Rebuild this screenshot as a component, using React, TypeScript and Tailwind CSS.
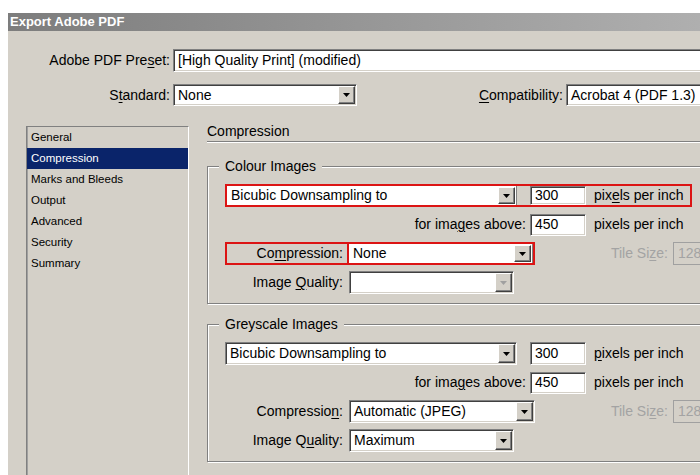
import type { ReactNode } from 'react'

const sections = ['General', 'Compression', 'Marks and Bleeds', 'Output', 'Advanced', 'Security', 'Summary']

const sunken =
  'border border-t-[#808080] border-l-[#808080] border-b-white border-r-white shadow-[inset_1px_1px_0_#404040,inset_-1px_-1px_0_#d4d0c8]'

function Arrow({ disabled }: { disabled?: boolean }) {
  return (
    <div className="w-[17px] self-stretch my-[1px] mr-[1px] flex items-center justify-center bg-[#d4d0c8] border border-t-white border-l-white border-b-[#404040] border-r-[#404040] shadow-[inset_-1px_-1px_0_#808080]">
      <svg width="7" height="4" viewBox="0 0 7 4">
        <path d="M0 0h7L3.5 4z" fill={disabled ? '#a0a0a0' : '#000'} />
      </svg>
    </div>
  )
}

function Select({
  value,
  className,
  disabled,
  bare,
}: {
  value: string
  className: string
  disabled?: boolean
  bare?: boolean
}) {
  return (
    <div
      className={`${className} flex items-center bg-white ${bare ? 'border-r border-r-[#808080]' : sunken}`}
    >
      <span className="flex-1 pl-[4px] whitespace-nowrap overflow-hidden">{value}</span>
      <Arrow disabled={disabled} />
    </div>
  )
}

function Field({ value, className = '' }: { value: string; className?: string }) {
  return (
    <div className={`w-[56px] flex items-center pl-[4px] bg-white ${sunken} ${className}`}>{value}</div>
  )
}

function Key({ before, k, after }: { before: string; k: string; after: string }) {
  return (
    <>
      {before}
      <span className="underline underline-offset-2">{k}</span>
      {after}
    </>
  )
}

function TileSize() {
  return (
    <>
      <div className="w-[138px] text-right pr-[5px] text-[#a3a3a3] whitespace-nowrap">
        <Key before="Tile Si" k="z" after="e:" />
      </div>
      <div className="w-[60px] h-[23px] flex items-center pl-[4px] text-[#a3a3a3] bg-[#d4d0c8] border border-[#a0a0a0] shrink-0">
        128
      </div>
    </>
  )
}

function Group({ title, children }: { title: string; children: ReactNode }) {
  return (
    <fieldset className="border border-[#808080] shadow-[inset_1px_1px_0_#fff,1px_1px_0_#fff] pl-[11px] pb-[9px]">
      <legend className="px-[6px] leading-[16px] bg-[#d4d0c8]">{title}</legend>
      <div className="pl-[6px] pt-[10px] flex flex-col gap-[6px]">{children}</div>
    </fieldset>
  )
}

export default function App() {
  return (
    <div className="w-[700px] h-[475px] overflow-hidden bg-white pt-[13px] pl-[8px] font-['Liberation_Sans',Arial,sans-serif] text-[14px] text-black">
      <div className="w-[770px] h-[470px] bg-[#d4d0c8] flex flex-col">
        <div className="h-[18px] shrink-0 bg-gradient-to-r from-[#7d7d7d] to-[#b5b5b5] pl-[2px] text-white font-bold text-[13px] leading-[18px]">
          Export Adobe PDF
        </div>

        {/* preset + standard */}
        <div className="pt-[18px] flex flex-col">
          <div className="flex items-center h-[23px]">
            <div className="w-[165px] text-right pr-[3px] whitespace-nowrap">
              <Key before="Adobe PDF Pre" k="s" after="et:" />
            </div>
            <div className={`flex-1 h-full flex items-center pl-[4px] bg-white ${sunken}`}>
              [High Quality Print] (modified)
            </div>
          </div>
          <div className="flex items-center h-[22px] mt-[12px]">
            <div className="w-[165px] text-right pr-[3px]">
              <Key before="S" k="t" after="andard:" />
            </div>
            <Select value="None" className="w-[184px] h-full" />
            <div className="w-[209px] text-right pr-[3px]">
              <Key before="" k="C" after="ompatibility:" />
            </div>
            <div className={`flex-1 h-full flex items-center pl-[4px] bg-white ${sunken}`}>
              Acrobat 4 (PDF 1.3)
            </div>
          </div>
        </div>

        <div className="flex flex-1 mt-[20px] min-h-0">
          {/* section list */}
          <div className="ml-[18px] w-[163px] border border-t-[#808080] border-l-[#808080] border-b-white border-r-white shadow-[inset_1px_0_0_#a0a0a0] text-[11.5px]">
            {sections.map((s) => (
              <div
                key={s}
                className={`h-[21px] leading-[21px] pl-[4px] ${s === 'Compression' ? 'bg-[#0a246a] text-white' : ''}`}
              >
                {s}
              </div>
            ))}
          </div>

          {/* compression settings */}
          <div className="ml-[18px] flex-1 flex flex-col">
            <div className="h-[16px] leading-[10px] border-b border-[#808080] shadow-[0_1px_0_#fff]">Compression</div>

            <div className="mt-[16px]">
              <Group title="Colour Images">
                <div className="w-[467px] h-[23px] flex items-center border-2 border-[#dc1414]">
                  <Select value="Bicubic Downsampling to" className="w-[290px] h-full" bare />
                  <Field value="300" className="ml-[13px] h-full" />
                  <span className="ml-[8px] whitespace-nowrap">
                    <Key before="pix" k="e" after="ls per inch" />
                  </span>
                </div>
                <div className="flex items-center h-[23px]">
                  <div className="w-[305px] text-right pr-[4px] whitespace-nowrap">
                    <Key before="for ima" k="g" after="es above:" />
                  </div>
                  <Field value="450" className="h-[22px]" />
                  <span className="ml-[8px] whitespace-nowrap">pixels per inch</span>
                </div>
                <div className="flex items-center h-[23px]">
                  <div className="w-[124px] h-full flex items-center justify-end pr-[4px] border-2 border-[#dc1414]">
                    <Key before="Co" k="m" after="pression:" />
                  </div>
                  <div className="w-[188px] h-full -ml-[2px] border-2 border-[#dc1414]">
                    <Select value="None" className="w-full h-full" bare />
                  </div>
                  <TileSize />
                </div>
                <div className="flex items-center h-[23px]">
                  <div className="w-[124px] text-right pr-[6px] whitespace-nowrap">
                    <Key before="Image " k="Q" after="uality:" />
                  </div>
                  <Select value="" className="w-[165px] h-full" disabled />
                </div>
              </Group>
            </div>

            <div className="mt-[12px]">
              <Group title="Greyscale Images">
                <div className="flex items-center h-[23px]">
                  <Select value="Bicubic Downsampling to" className="w-[292px] h-full" />
                  <Field value="300" className="ml-[13px] h-full" />
                  <span className="ml-[8px] whitespace-nowrap">
                    <Key before="" k="p" after="ixels per inch" />
                  </span>
                </div>
                <div className="flex items-center h-[23px]">
                  <div className="w-[305px] text-right pr-[4px] whitespace-nowrap">
                    <Key before="for ima" k="g" after="es above:" />
                  </div>
                  <Field value="450" className="h-[22px]" />
                  <span className="ml-[8px] whitespace-nowrap">pixels per inch</span>
                </div>
                <div className="flex items-center h-[23px]">
                  <div className="w-[124px] text-right pr-[6px] whitespace-nowrap">
                    <Key before="Compressio" k="n" after=":" />
                  </div>
                  <Select value="Automatic (JPEG)" className="w-[186px] h-full" />
                  <TileSize />
                </div>
                <div className="flex items-center h-[23px]">
                  <div className="w-[124px] text-right pr-[6px] whitespace-nowrap">
                    <Key before="Image Q" k="u" after="ality:" />
                  </div>
                  <Select value="Maximum" className="w-[165px] h-full" />
                </div>
              </Group>
            </div>
          </div>
        </div>
      </div>
    </div>
  )
}
